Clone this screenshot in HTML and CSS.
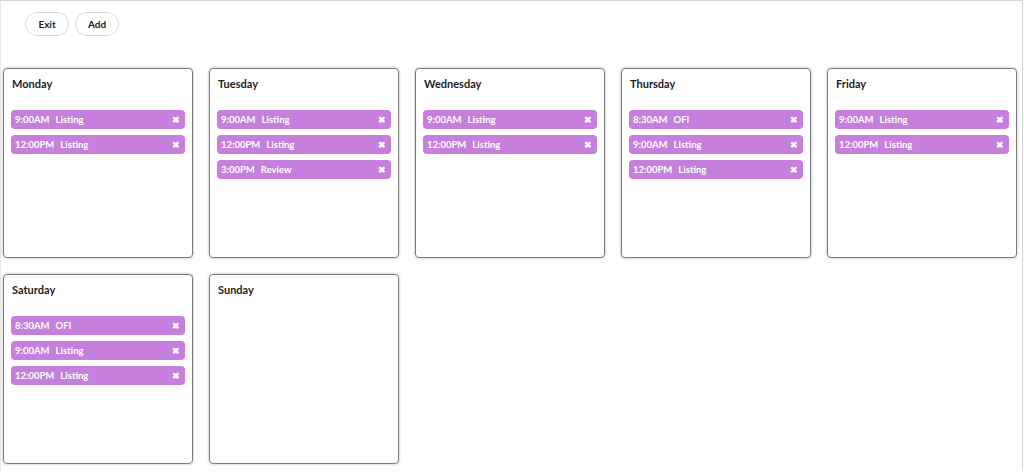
FILE: index.html
```html
<!DOCTYPE html>
<html>
<head>
<meta charset="utf-8">
<link rel="stylesheet" href="styles.css">
</head>
<body>
<div class="page">
  <div class="toolbar">
    <button class="btn">Exit</button>
    <button class="btn">Add</button>
  </div>
  <div class="grid">
    <div class="card">
      <div class="day">Monday</div>
      <div class="events">
        <div class="event"><span class="time">9:00AM</span><span class="label">Listing</span><span class="x">&#x2716;</span></div>
        <div class="event"><span class="time">12:00PM</span><span class="label">Listing</span><span class="x">&#x2716;</span></div>
      </div>
    </div>
    <div class="card">
      <div class="day">Tuesday</div>
      <div class="events">
        <div class="event"><span class="time">9:00AM</span><span class="label">Listing</span><span class="x">&#x2716;</span></div>
        <div class="event"><span class="time">12:00PM</span><span class="label">Listing</span><span class="x">&#x2716;</span></div>
        <div class="event"><span class="time">3:00PM</span><span class="label">Review</span><span class="x">&#x2716;</span></div>
      </div>
    </div>
    <div class="card">
      <div class="day">Wednesday</div>
      <div class="events">
        <div class="event"><span class="time">9:00AM</span><span class="label">Listing</span><span class="x">&#x2716;</span></div>
        <div class="event"><span class="time">12:00PM</span><span class="label">Listing</span><span class="x">&#x2716;</span></div>
      </div>
    </div>
    <div class="card">
      <div class="day">Thursday</div>
      <div class="events">
        <div class="event"><span class="time">8:30AM</span><span class="label">OFI</span><span class="x">&#x2716;</span></div>
        <div class="event"><span class="time">9:00AM</span><span class="label">Listing</span><span class="x">&#x2716;</span></div>
        <div class="event"><span class="time">12:00PM</span><span class="label">Listing</span><span class="x">&#x2716;</span></div>
      </div>
    </div>
    <div class="card">
      <div class="day">Friday</div>
      <div class="events">
        <div class="event"><span class="time">9:00AM</span><span class="label">Listing</span><span class="x">&#x2716;</span></div>
        <div class="event"><span class="time">12:00PM</span><span class="label">Listing</span><span class="x">&#x2716;</span></div>
      </div>
    </div>
    <div class="card">
      <div class="day">Saturday</div>
      <div class="events">
        <div class="event"><span class="time">8:30AM</span><span class="label">OFI</span><span class="x">&#x2716;</span></div>
        <div class="event"><span class="time">9:00AM</span><span class="label">Listing</span><span class="x">&#x2716;</span></div>
        <div class="event"><span class="time">12:00PM</span><span class="label">Listing</span><span class="x">&#x2716;</span></div>
      </div>
    </div>
    <div class="card">
      <div class="day">Sunday</div>
      <div class="events"></div>
    </div>
  </div>
</div>
</body>
</html>
```
FILE: styles.css
```css
html, body {
  margin: 0;
  padding: 0;
  background: #fff;
}
body {
  font-family: Lato, "Open Sans", sans-serif;
  color: #1e1e1e;
}
.page {
  width: 1023px;
  height: 471px;
  border-top: 1px solid #d4d4d4;
  border-right: 1px solid #d4d4d4;
  border-left: 1px solid #e6e6e6;
  box-sizing: border-box;
  overflow: hidden;
}
.toolbar {
  display: flex;
  gap: 6px;
  padding: 11px 0 0 24px;
  height: 56px;
}
.btn {
  font-family: inherit;
  font-size: 10px;
  font-weight: 700;
  color: #222;
  background: #fff;
  border: 1px solid #d8d8d8;
  border-radius: 12px;
  height: 24px;
  width: 44px;
  padding: 0;
}
.grid {
  display: grid;
  grid-template-columns: repeat(5, 190px);
  grid-auto-rows: 190px;
  column-gap: 16px;
  row-gap: 16px;
  padding-left: 2px;
}
.card {
  border: 1px solid #7c7c7c;
  border-radius: 4px;
  box-shadow: 0 0 3px rgba(0,0,0,0.3);
  padding: 9px 7px 8px 7px;
  box-sizing: border-box;
}
.day {
  font-size: 11px;
  font-weight: 700;
  padding-left: 1px;
  height: 32px;
  line-height: 12px;
}
.events {
  display: flex;
  flex-direction: column;
  gap: 6px;
}
.event {
  display: flex;
  align-items: center;
  height: 19px;
  background: #c67fdc;
  border-radius: 4px;
  color: #fff;
  font-size: 9.5px;
  font-weight: 700;
  padding: 0 5px 0 4px;
}
.time {
  margin-right: 6px;
}
.label {
  flex: 1;
}
.x {
  font-size: 8.5px;
  color: #fff;
}
```
